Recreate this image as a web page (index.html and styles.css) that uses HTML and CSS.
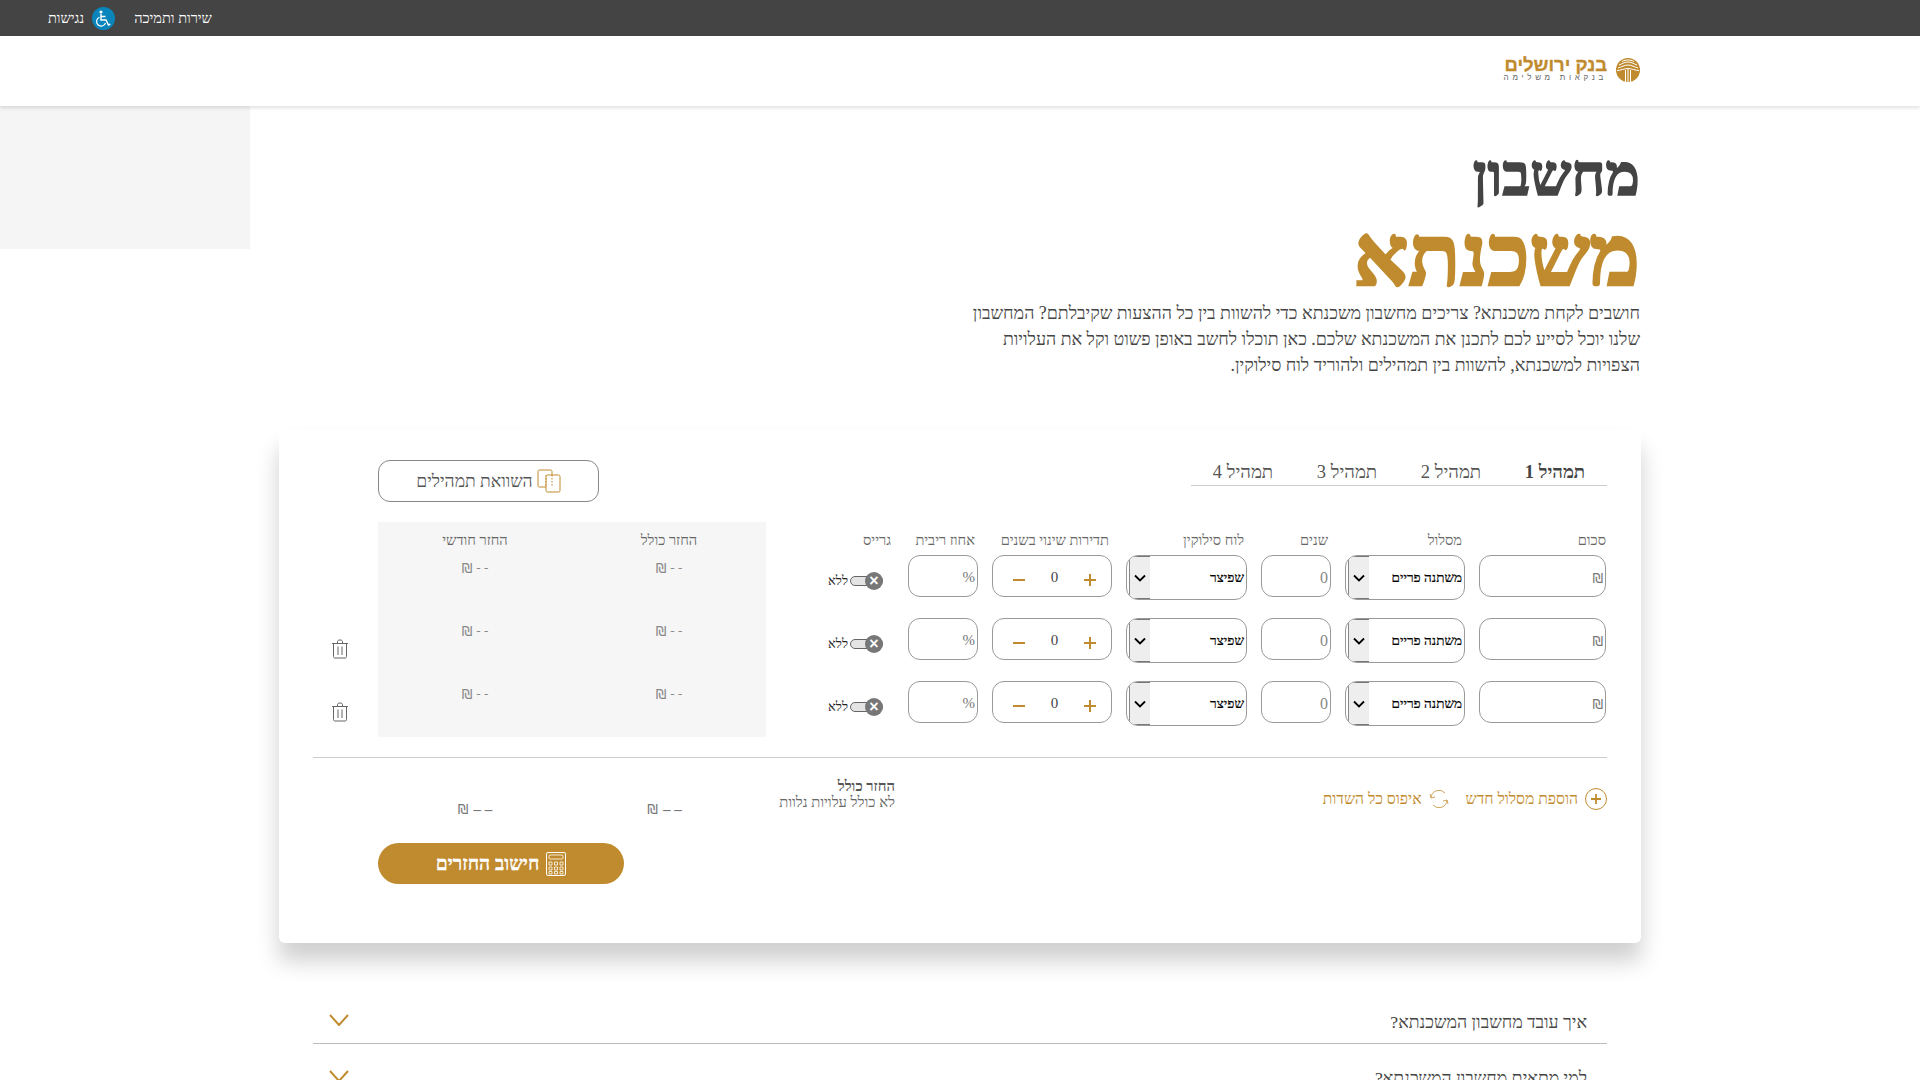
FILE: index.html
```html
<!DOCTYPE html>
<html lang="he" dir="rtl">
<head>
    <meta charset="UTF-8">
    <meta name="viewport" content="width=device-width, initial-scale=1.0">
    <title>מחשבון משכנתא</title>
    <link rel="stylesheet" href="styles.css">
</head>
<body>
    <div class="topbar">
        <a class="top-link">שירות ותמיכה</a>
        <a class="top-link access">
            <svg class="access-icon" viewBox="0 0 23 23">
                <circle cx="11.5" cy="11.5" r="11.5" fill="#0a85bb"/>
                <circle cx="9" cy="5" r="1.6" fill="#fff"/>
                <path d="M9 7v6h5l2.5 5 1.8-.8M9 9.5h4.5" fill="none" stroke="#fff" stroke-width="1.4"/>
                <path d="M7.5 10.2a4.6 4.6 0 1 0 6 5.8" fill="none" stroke="#fff" stroke-width="1.2"/>
            </svg>
            נגישות
        </a>
    </div>

    <header class="header">
        <div class="logo">
            <svg class="logo-mark" viewBox="0 0 24 24">
                <circle cx="12" cy="12" r="12" fill="#bf8b2e"/>
                <path d="M2 10c4-1 6-3 10-3s6 2 10 3M3 7c3-1 5-3 9-3s6 2 9 3M6 3.500c2-1 4-1.500 6-1.500s4 .5 6 1.500M1 12.500c4 0 7-2 11-2s7 2 11 2" fill="none" stroke="#fff" stroke-width="1"/>
                <path d="M9.500 12v12M12 11v13M14.500 12v12" fill="none" stroke="#fff" stroke-width="1"/>
            </svg>
            <div class="logo-text">
                <div class="logo-name">בנק ירושלים</div>
                <div class="logo-sub">בנקאות משלימה</div>
            </div>
        </div>
    </header>

    <section class="hero">
        <div class="hero-text">
            <h1 class="title"><span class="title-small">מחשבון</span><span class="title-big">משכנתא</span></h1>
            <p class="intro">חושבים לקחת משכנתא? צריכים מחשבון משכנתא כדי להשוות בין כל ההצעות שקיבלתם? המחשבון שלנו יוכל לסייע לכם לתכנן את המשכנתא שלכם. כאן תוכלו לחשב באופן פשוט וקל את העלויות הצפויות למשכנתא, להשוות בין תמהילים ולהוריד לוח סילוקין.</p>
        </div>
        <div class="side-box"></div>
    </section>

    <main class="card">
        <div class="calc-top">
            <div class="calc-form">
                <div class="tabs">
                    <div class="tab active">תמהיל 1</div>
                    <div class="tab">תמהיל 2</div>
                    <div class="tab">תמהיל 3</div>
                    <div class="tab">תמהיל 4</div>
                </div>
                <div class="fields">
                    <div class="label first">סכום</div>
                    <div class="label">מסלול</div>
                    <div class="label">שנים</div>
                    <div class="label">לוח סילוקין</div>
                    <div class="label">תדירות שינוי בשנים</div>
                    <div class="label">אחוז ריבית</div>
                    <div class="label">גרייס</div>

                    <div class="field unit"><span class="sh">₪</span></div>
                    <div class="select"><span class="select-text">משתנה פריים</span><span class="select-arrow"><svg viewBox="0 0 12 8"><path d="M1 1.500l5 5 5-5" fill="none" stroke="#000" stroke-width="1.800"/></svg></span></div>
                    <div class="field num">0</div>
                    <div class="select"><span class="select-text">שפיצר</span><span class="select-arrow"><svg viewBox="0 0 12 8"><path d="M1 1.500l5 5 5-5" fill="none" stroke="#000" stroke-width="1.800"/></svg></span></div>
                    <div class="field stepper"><span class="plus"></span><span class="step-value">0</span><span class="minus"></span></div>
                    <div class="field unit percent">%</div>
                    <div class="grace"><span class="toggle"><span class="knob">×</span></span><span class="grace-text">ללא</span></div>

                    <div class="field unit"><span class="sh">₪</span></div>
                    <div class="select"><span class="select-text">משתנה פריים</span><span class="select-arrow"><svg viewBox="0 0 12 8"><path d="M1 1.500l5 5 5-5" fill="none" stroke="#000" stroke-width="1.800"/></svg></span></div>
                    <div class="field num">0</div>
                    <div class="select"><span class="select-text">שפיצר</span><span class="select-arrow"><svg viewBox="0 0 12 8"><path d="M1 1.500l5 5 5-5" fill="none" stroke="#000" stroke-width="1.800"/></svg></span></div>
                    <div class="field stepper"><span class="plus"></span><span class="step-value">0</span><span class="minus"></span></div>
                    <div class="field unit percent">%</div>
                    <div class="grace"><span class="toggle"><span class="knob">×</span></span><span class="grace-text">ללא</span></div>

                    <div class="field unit"><span class="sh">₪</span></div>
                    <div class="select"><span class="select-text">משתנה פריים</span><span class="select-arrow"><svg viewBox="0 0 12 8"><path d="M1 1.500l5 5 5-5" fill="none" stroke="#000" stroke-width="1.800"/></svg></span></div>
                    <div class="field num">0</div>
                    <div class="select"><span class="select-text">שפיצר</span><span class="select-arrow"><svg viewBox="0 0 12 8"><path d="M1 1.500l5 5 5-5" fill="none" stroke="#000" stroke-width="1.800"/></svg></span></div>
                    <div class="field stepper"><span class="plus"></span><span class="step-value">0</span><span class="minus"></span></div>
                    <div class="field unit percent">%</div>
                    <div class="grace"><span class="toggle"><span class="knob">×</span></span><span class="grace-text">ללא</span></div>
                </div>
            </div>

            <div class="calc-results">
                <button class="compare" type="button">
                    <svg class="compare-icon" viewBox="0 0 24 24">
                        <rect x="1" y="1" width="14" height="17" rx="1.500" fill="none" stroke="#bf8b2e"/>
                        <rect x="9" y="6" width="14" height="17" rx="1.500" fill="#fff" stroke="#bf8b2e"/>
                        <path d="M9 6v12M15 6v12" fill="none" stroke="#bf8b2e" stroke-dasharray="1.500 1.500"/>
                    </svg>
                    השוואת תמהילים
                </button>
                <div class="results-row">
                    <div class="results">
                        <div class="res-head">החזר כולל</div>
                        <div class="res-head">החזר חודשי</div>
                        <div class="res-val"><span>- -</span><span class="sh">₪</span></div>
                        <div class="res-val"><span>- -</span><span class="sh">₪</span></div>
                        <div class="res-val"><span>- -</span><span class="sh">₪</span></div>
                        <div class="res-val"><span>- -</span><span class="sh">₪</span></div>
                        <div class="res-val"><span>- -</span><span class="sh">₪</span></div>
                        <div class="res-val"><span>- -</span><span class="sh">₪</span></div>
                    </div>
                    <div class="trash-col">
                        <svg class="trash" viewBox="0 0 18 20"><path d="M1 4.500h16M6.500 4.500V2.500C6.500 1.500 7.500 1 9 1s2.500 .5 2.500 1.500v2M2.500 4.500v13c0 1 .5 1.500 1.500 1.500h10c1 0 1.500-.5 1.500-1.500v-13M7 7.500v8.500M11 7.500v8.500" fill="none" stroke="#666" stroke-width="1"/></svg>
                        <svg class="trash" viewBox="0 0 18 20"><path d="M1 4.500h16M6.500 4.500V2.500C6.500 1.500 7.500 1 9 1s2.500 .5 2.500 1.500v2M2.500 4.500v13c0 1 .5 1.500 1.500 1.500h10c1 0 1.500-.5 1.500-1.500v-13M7 7.500v8.500M11 7.500v8.500" fill="none" stroke="#666" stroke-width="1"/></svg>
                    </div>
                </div>
            </div>
        </div>

        <div class="summary">
            <div class="actions">
                <a class="action">
                    <svg class="add-icon" viewBox="0 0 22 22"><circle cx="11" cy="11" r="10.500" fill="none" stroke="#bf8b2e"/><path d="M11 6v10M6 11h10" fill="none" stroke="#bf8b2e" stroke-width="1.800"/></svg>
                    הוספת מסלול חדש
                </a>
                <a class="action">
                    <svg class="reset-icon" viewBox="0 0 20 20"><path d="M2 9a8 8 0 0 1 14-5M18 11a8 8 0 0 1-14 5" fill="none" stroke="#c99c4c" stroke-width=".9"/><path d="M1 5l1 4 4-1M19 15l-1-4-4 1" fill="none" stroke="#c99c4c" stroke-width=".9"/></svg>
                    איפוס כל השדות
                </a>
            </div>
            <div class="total-label"><b>החזר כולל</b><br>לא כולל עלויות נלוות</div>
            <div class="total-val"><span>– –</span><span class="sh">₪</span></div>
            <div class="total-val"><span>– –</span><span class="sh">₪</span></div>
        </div>

        <div class="submit-row">
            <button class="submit" type="button">
                <svg class="calc-icon" viewBox="0 0 20 24">
                    <rect x=".5" y=".5" width="19" height="23" rx="1.500" fill="none" stroke="#fff"/>
                    <rect x="3" y="3" width="14" height="4" rx="1" fill="none" stroke="#fff" stroke-width=".8"/>
                    <path d="M3 10h3v3H3zM8.500 10h3v3h-3zM14 10h3v3h-3zM3 15h3v3H3zM8.500 15h3v3h-3zM14 15h3v3h-3zM3 19.500h3v2.500H3zM8.500 19.500h3v2.500h-3zM14 19.500h3v2.500h-3z" fill="none" stroke="#fff" stroke-width=".8"/>
                </svg>
                חישוב החזרים
            </button>
        </div>
    </main>

    <section class="faq">
        <div class="faq-row">
            <span>איך עובד מחשבון המשכנתא?</span>
            <svg class="chevron" viewBox="0 0 20 12"><path d="M1 1l9 10 9-10" fill="none" stroke="#bf8b2e" stroke-width="2"/></svg>
        </div>
        <div class="faq-row">
            <span>למי מתאים מחשבון המשכנתא?</span>
            <svg class="chevron" viewBox="0 0 20 12"><path d="M1 1l9 10 9-10" fill="none" stroke="#bf8b2e" stroke-width="2"/></svg>
        </div>
    </section>
</body>
</html>
```

FILE: styles.css
```css
html, body{
    margin: 0;
    height: 1080px;
    overflow: hidden;
    background: #fff;
}
body{
    font-family: "Liberation Serif", serif;
    color: #444;
}
.sh{
    font-family: "DejaVu Sans", sans-serif;
    font-size: 13.5px;
}

/* top */
.topbar{
    height: 36px;
    background: #444;
    display: flex;
    justify-content: flex-end;
    align-items: center;
    gap: 19px;
    padding-left: 48px;
    color: #fff;
    font-size: 14.5px;
}
.top-link{
    display: flex;
    align-items: center;
    gap: 8px;
}
.access-icon{
    width: 23px;
    height: 23px;
}
.header{
    height: 70px;
    display: flex;
    align-items: center;
    padding-right: 280px;
    background: #fff;
    box-shadow: 0 2px 4px rgba(0,0,0,.12);
    position: relative;
}
.logo{
    display: flex;
    align-items: center;
    gap: 9px;
    margin-top: -2px;
}
.logo-mark{
    width: 24px;
    height: 24px;
}
.logo-name{
    font-family: "Liberation Sans", sans-serif;
    font-weight: bold;
    font-size: 18.5px;
    line-height: 15px;
    color: #bf8b2e;
    -webkit-text-stroke: .3px #bf8b2e;
}
.logo-sub{
    font-family: "Liberation Sans", sans-serif;
    font-size: 8px;
    line-height: 12px;
    letter-spacing: 3.7px;
    color: #666;
}

/* hero */
.hero{
    display: flex;
    justify-content: space-between;
    height: 324px;
}
.hero-text{
    width: 690px;
    margin-right: 280px;
}
.side-box{
    width: 250px;
    height: 143px;
    background: #f5f5f5;
}
.title{
    margin: 0;
    padding-top: 40px;
    font-weight: bold;
}
.title-small{
    display: block;
    font-size: 58px;
    line-height: 60px;
    -webkit-text-stroke: 1.5px #444;
}
.title-big{
    display: block;
    margin-top: 5px;
    margin-bottom: -1px;
    font-size: 85px;
    line-height: 90px;
    color: #bf8b2e;
    -webkit-text-stroke: 2.5px #bf8b2e;
}
.intro{
    margin: 0;
    font-size: 17.8px;
    line-height: 26px;
    color: #444;
}

/* card */
.card{
    width: 1294px;
    margin: 0 auto;
    padding: 30px 34px 59px;
    background: #fff;
    border-radius: 6px;
    box-shadow: 0 18px 22px rgba(0,0,0,.19);
}
.calc-top{
    display: flex;
    justify-content: space-between;
    padding-bottom: 20px;
    border-bottom: 1px solid #ccc;
}
.tabs{
    display: grid;
    grid-template-columns: repeat(4, 104px);
    width: 416px;
    height: 25px;
    border-bottom: 1px solid #ccc;
}
.tab{
    text-align: center;
    font-size: 18.5px;
    line-height: 24px;
    color: #555;
}
.tab.active{
    font-weight: bold;
    color: #444;
}
.fields{
    display: grid;
    grid-template-columns: 127px 120px 70px 121px 120px 70px 80px;
    grid-template-rows: 24px 63px 63px 56px;
    column-gap: 14px;
    margin-top: 45px;
    margin-right: 1px;
}
.label{
    font-size: 14.6px;
    line-height: 19px;
    color: #666;
    padding-right: 3px;
}
.label.first{
    padding-right: 0;
}
.field{
    box-sizing: border-box;
    height: 42px;
    padding-top: 3px;
    border: 1px solid #999;
    border-radius: 12px;
    background: #fff;
    display: flex;
    align-items: center;
}
.unit{
    padding-right: 2px;
    font-size: 14px;
    color: #777;
}
.percent{
    font-size: 15px;
}
.num{
    padding-right: 2px;
    font-size: 16px;
    color: #888;
}
.stepper{
    justify-content: space-between;
    padding-right: 15px;
    padding-left: 20px;
}
.step-value{
    font-size: 15px;
    color: #444;
}
.plus, .minus{
    width: 12px;
    height: 12px;
    margin-top: 4px;
    background: linear-gradient(#bf8b2e, #bf8b2e) center / 12px 2px no-repeat;
}
.plus{
    background:
        linear-gradient(#bf8b2e, #bf8b2e) center / 12px 2px no-repeat,
        linear-gradient(#bf8b2e, #bf8b2e) center / 2px 12px no-repeat;
}
.select{
    box-sizing: border-box;
    height: 45px;
    border: 1px solid #999;
    border-radius: 12px;
    background: #fff;
    display: flex;
    align-items: center;
    justify-content: space-between;
    overflow: hidden;
    padding-left: 2px;
    padding-right: 2px;
}
.select-text{
    font-size: 13.5px;
    color: #000;
    -webkit-text-stroke: .2px #000;
}
.select-arrow{
    box-sizing: border-box;
    width: 21px;
    height: 100%;
    background: #eee;
    border-left: 1px solid #888;
    border-top: 1px solid #777;
    border-bottom: 1px solid #777;
    display: flex;
    align-items: center;
    justify-content: center;
}
.select-arrow svg{
    width: 12px;
    height: 8px;
}
.grace{
    display: flex;
    align-items: center;
    height: 52px;
    padding-right: 11px;
    gap: 2px;
}
.toggle{
    position: relative;
    width: 33px;
    height: 10px;
    box-sizing: border-box;
    border: 1px solid #666;
    border-radius: 6px;
    background: #e4e4e4;
}
.knob{
    position: absolute;
    right: -1px;
    top: -5px;
    width: 18px;
    height: 18px;
    border-radius: 50%;
    background: #777;
    color: #fff;
    font: bold 16px/18px "Liberation Sans", sans-serif;
    text-align: center;
}
.grace-text{
    font-size: 13px;
    color: #222;
}

/* results */
.calc-results{
    width: 453px;
}
.compare{
    display: flex;
    align-items: center;
    justify-content: center;
    gap: 4px;
    width: 221px;
    height: 42px;
    margin-right: 167px;
    padding: 0;
    border: 1px solid #888;
    border-radius: 12px;
    background: #fff;
    font-family: inherit;
    font-size: 17.5px;
    color: #555;
}
.compare-icon{
    width: 24px;
    height: 24px;
}
.results-row{
    display: flex;
    margin-top: 20px;
}
.results{
    box-sizing: border-box;
    width: 388px;
    height: 215px;
    padding-top: 9px;
    background: #f6f6f6;
    display: grid;
    grid-template-columns: 1fr 1fr;
    grid-template-rows: 28px 63px 63px 52px;
    justify-items: center;
}
.res-head{
    font-size: 14.6px;
    line-height: 19px;
    color: #666;
}
.res-val{
    display: flex;
    gap: 4px;
    font-size: 13px;
    line-height: 18px;
    color: #888;
}
.trash-col{
    width: 54px;
    margin-right: 11px;
    padding-top: 117px;
    display: flex;
    flex-direction: column;
    align-items: center;
    gap: 43px;
}
.trash{
    width: 18px;
    height: 20px;
}

/* summary */
.summary{
    display: flex;
    align-items: flex-start;
    padding-top: 20px;
}
.actions{
    width: 712px;
    display: flex;
    gap: 17px;
    color: #bf8b2e;
    font-size: 15.7px;
}
.action{
    display: flex;
    align-items: center;
    gap: 7px;
    height: 22px;
    margin-top: 10px;
}
.add-icon{
    width: 22px;
    height: 22px;
}
.reset-icon{
    width: 20px;
    height: 20px;
}
.total-label{
    width: 129px;
    font-size: 14.8px;
    line-height: 16px;
    color: #666;
}
.total-label b{
    color: #555;
}
.total-val{
    box-sizing: border-box;
    width: 194px;
    height: 18px;
    margin-top: 22px;
    display: flex;
    justify-content: center;
    gap: 5px;
    font-size: 15px;
    line-height: 18px;
    font-weight: bold;
    color: #777;
}
.total-val .sh{
    font-weight: normal;
}
.total-label + .total-val{
    padding-right: 9px;
}
.submit-row{
    display: flex;
    justify-content: flex-end;
    margin-top: 25px;
    padding-left: 65px;
}
.submit{
    display: flex;
    align-items: center;
    justify-content: center;
    gap: 7px;
    width: 246px;
    height: 41px;
    border: 0;
    border-radius: 21px;
    background: #bf8b2e;
    color: #fff;
    font-family: inherit;
    font-weight: bold;
    font-size: 19.3px;
    -webkit-text-stroke: .3px #fff;
}
.calc-icon{
    width: 20px;
    height: 24px;
}

/* faq */
.faq{
    width: 1294px;
    margin: 45px auto 0;
}
.faq-row{
    box-sizing: content-box;
    height: 41px;
    padding: 14px 20px 0 16px;
    display: flex;
    justify-content: space-between;
    align-items: center;
    border-bottom: 1px solid #bbb;
    font-size: 17.7px;
    color: #444;
}
.chevron{
    width: 20px;
    height: 12px;
    margin-top: -6px;
}
```
